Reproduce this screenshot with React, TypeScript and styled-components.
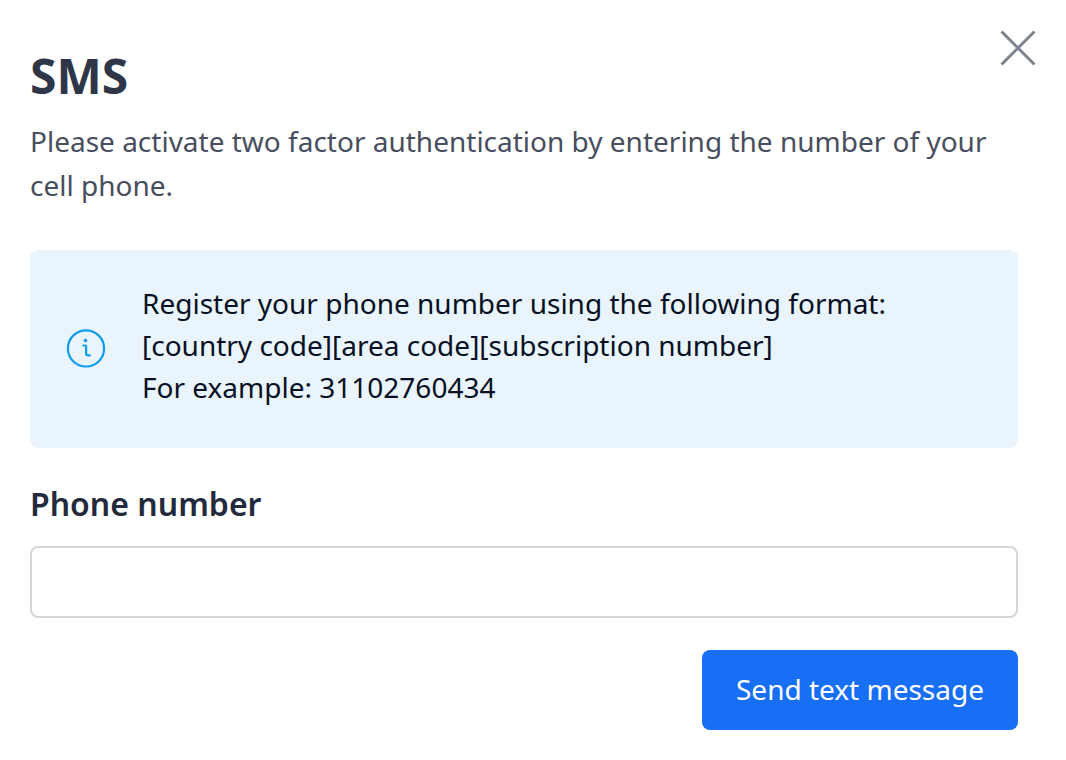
import React from "react";
import styled, { createGlobalStyle } from "styled-components";

const GlobalStyle = createGlobalStyle`
  *, *::before, *::after { box-sizing: border-box; }
  body {
    margin: 0;
    background: #ffffff;
    font-family: "Noto Sans", sans-serif;
    color: #2e3648;
  }
`;

const Dialog = styled.main`
  padding: 30px 48px 30px 30px;
`;

const Header = styled.header`
  display: flex;
  align-items: flex-start;
  justify-content: space-between;
  margin-right: -18px;
`;

const Title = styled.h1`
  margin: 11px 0 0;
  font-size: 48px;
  line-height: 70px;
  font-weight: 700;
`;

const CloseButton = styled.button`
  width: 36px;
  height: 36px;
  padding: 0;
  border: 0;
  background: none;
  color: #7c828f;
  cursor: pointer;

  svg { display: block; }
`;

const Intro = styled.p`
  margin: 8px 0 0;
  font-size: 28px;
  line-height: 44px;
  color: #484e5e;
`;

const Notice = styled.section`
  display: flex;
  align-items: center;
  gap: 36px;
  margin-top: 43px;
  padding: 32px 36px;
  border-radius: 8px;
  background: #e9f4fd;
`;

const InfoIcon = styled.svg`
  flex: none;
`;

const NoticeText = styled.p`
  margin: 0;
  padding-bottom: 8px;
  color: #071023;
  font-size: 28px;
  line-height: 42px;
`;

const Form = styled.form`
  display: flex;
  flex-direction: column;
  margin-top: 32px;
`;

const Label = styled.label`
  font-size: 32px;
  line-height: 48px;
  font-weight: 600;
  color: #222a3b;
`;

const PhoneInput = styled.input`
  width: 100%;
  height: 72px;
  margin-top: 18px;
  padding: 0 24px;
  border: 2px solid #d6d6d6;
  border-radius: 8px;
  background: #ffffff;
  font: inherit;
  font-size: 28px;
`;

const SubmitButton = styled.button`
  align-self: flex-end;
  height: 80px;
  margin-top: 32px;
  padding: 0 34px 2px;
  border: 0;
  border-radius: 8px;
  background: #176ff6;
  color: #ffffff;
  font: inherit;
  font-size: 28px;
  cursor: pointer;
`;

export default function App() {
  return (
    <>
      <GlobalStyle />
      <Dialog>
        <Header>
          <Title>SMS</Title>
          <CloseButton type="button" aria-label="Close">
            <svg width="36" height="36" viewBox="0 0 36 36" fill="none" stroke="currentColor" strokeWidth="3">
              <path d="M1.5 1.5 34.5 34.5M34.5 1.5 1.5 34.5" />
            </svg>
          </CloseButton>
        </Header>
        <Intro>
          Please activate two factor authentication by entering the number of your cell phone.
        </Intro>
        <Notice>
          <InfoIcon
            width="40"
            height="40"
            viewBox="0 0 40 40"
            fill="none"
            stroke="#0f9bee"
            strokeWidth="2.2"
            strokeLinecap="round"
            strokeLinejoin="round"
            aria-hidden="true"
          >
            <circle cx="20" cy="19.4" r="18.1" />
            <path d="M17.4 16.5H19.2Q20.1 16.5 20.1 17.4V24.3Q20.1 26.4 22.2 26.4H23.7" />
            <circle cx="19.5" cy="11.5" r="1.8" fill="#0f9bee" stroke="none" />
          </InfoIcon>
          <NoticeText>
            Register your phone number using the following format:
            <br />
            [country code][area code][subscription number]
            <br />
            For example: 31102760434
          </NoticeText>
        </Notice>
        <Form onSubmit={(event) => event.preventDefault()}>
          <Label htmlFor="phone">Phone number</Label>
          <PhoneInput id="phone" type="tel" />
          <SubmitButton type="submit">Send text message</SubmitButton>
        </Form>
      </Dialog>
    </>
  );
}
